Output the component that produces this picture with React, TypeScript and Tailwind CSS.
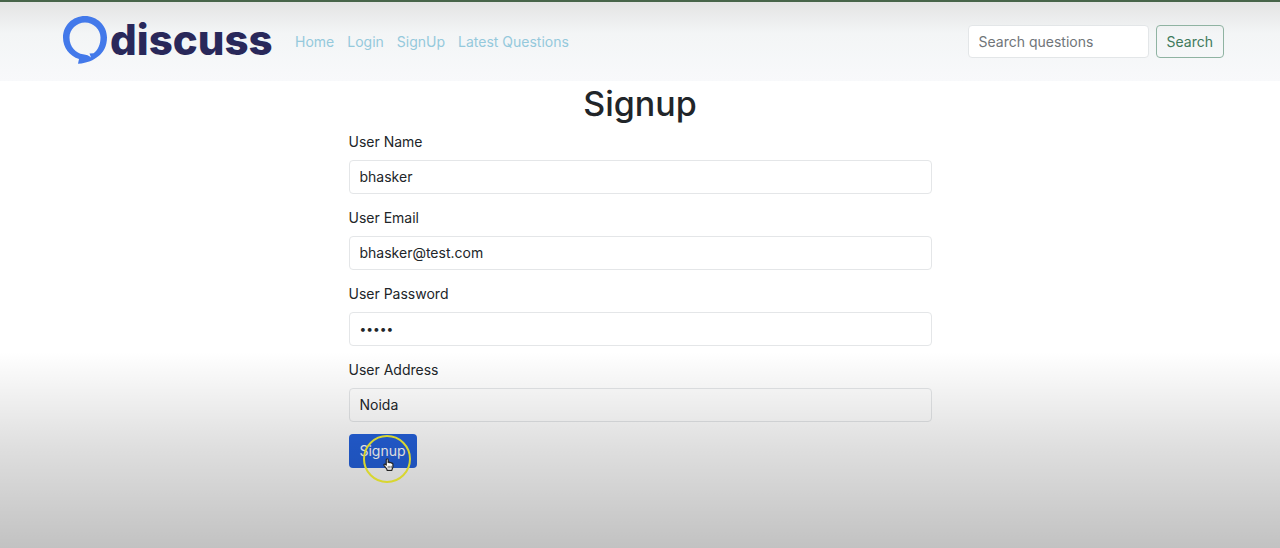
import React from "react";

const links = ["Home", "Login", "SignUp", "Latest Questions"];

const fields = [
  { id: "username", label: "User Name", type: "text", value: "bhasker" },
  { id: "email", label: "User Email", type: "email", value: "bhasker@test.com" },
  { id: "password", label: "User Password", type: "password", value: "12345" },
  { id: "address", label: "User Address", type: "text", value: "Noida" },
];

function Logo() {
  return (
    <span className="flex h-12 items-center gap-[3px]" role="img" aria-label="discuss">
      <svg className="h-12 w-11 shrink-0" viewBox="0 0 44 48" aria-hidden="true">
        <path
          fill="#4379ea"
          fillRule="evenodd"
          d="M22 0C34 0 44 9.500 44 21.500C44 30 40.500 36.500 35 40.500C30.500 44 25 47 15 47.800L16 43C6.500 40 0 31.500 0 21.500C0 9.500 9.500 0 22 0ZM22 6.500C13.500 6.500 6.500 13.500 6.500 21.500C6.500 31 13 37.300 20 38.300C23.500 38.800 26 39.500 28 41.500L26.500 37.500L30.500 37.300C35 34 37.500 28.500 37.500 21.500C37.500 13.500 30.500 6.500 22 6.500Z"
        />
      </svg>
      <span className="text-[42px] leading-[50px] font-extrabold text-[#29285a]">discuss</span>
    </span>
  );
}

function Pointer() {
  return (
    <div className="pointer-events-none absolute left-[14px] top-px z-10 size-12 rounded-full border-2 border-[#d8d630]">
      <svg className="absolute left-[18px] top-[21px] h-[13px] w-[11px]" viewBox="0 0 16 20" aria-hidden="true">
        <path
          d="M4.500 11V3c0-2.400 3-2.400 3 0v4c.6-1 2.400-.8 2.700.4.800-.8 2.200-.4 2.400.7 1.100-.4 2.200.2 2.200 1.400V13c0 3-1.600 3.600-1.600 6H6C5.800 16.500 3 14.500 1.200 11.500c-1-1.800 1.300-2.700 2.300-1.500Z"
          fill="#fff"
          stroke="#222"
          strokeWidth="1.800"
          strokeLinejoin="round"
        />
        <path d="M7.500 12v4M10 12v4M12.300 12v4" stroke="#222" strokeWidth="1" />
      </svg>
    </div>
  );
}

export default function App() {
  return (
    <div className="relative min-h-screen bg-white text-sm leading-6 text-[#212529] [font-family:Inter,sans-serif]">
      <header className="flex items-center border-t-2 border-[#48654a] bg-linear-to-b from-[#e4e4e4] via-[#f3f5f6] via-40% to-[#f8f9fb] pt-[14px] pr-14 pb-[17px] pl-[63px]">
        <a href="#home" className="w-[210px] shrink-0">
          <Logo />
        </a>
        <nav className="ml-[22px] flex gap-[13px] pt-1 text-[#95c9dc]">
          {links.map((link) => (
            <a key={link} href="#" className="whitespace-nowrap">
              {link}
            </a>
          ))}
        </nav>
        <form className="ml-auto flex gap-[7px] pt-[2px]" role="search" onSubmit={(e) => e.preventDefault()}>
          <input
            type="search"
            aria-label="Search questions"
            placeholder="Search questions"
            className="h-[33px] w-[181px] rounded-sm border border-[#e3e6e8] bg-white px-[10px] placeholder:text-[#707579]"
          />
          <button type="submit" className="h-[33px] rounded-sm border border-[#8fb3a2] px-[10px] pt-px text-[#3f7a5c]">
            Search
          </button>
        </form>
      </header>
      <main className="mx-auto w-full max-w-[583px]">
        <h1 className="pt-px pb-1 text-center text-[34px] leading-[44px] font-medium">Signup</h1>
        <form onSubmit={(e) => e.preventDefault()}>
          {fields.map((field) => (
            <div key={field.id} className="mb-3">
              <label htmlFor={field.id} className="mb-[6px] block leading-6">
                {field.label}
              </label>
              <input
                id={field.id}
                type={field.type}
                defaultValue={field.value}
                className="block h-[34px] w-full rounded-sm border border-[#e4e6e8] px-[10px] pb-[2px] [&[type=password]]:text-xs"
              />
            </div>
          ))}
          <div className="relative">
            <button type="submit" className="h-[34px] rounded-sm bg-[#2461dc] px-[11px] text-white">
              Signup
            </button>
            <Pointer />
          </div>
        </form>
      </main>
      <div className="pointer-events-none absolute inset-x-0 bottom-0 h-[196px] bg-linear-to-b from-transparent via-black/13 to-black/24" />
    </div>
  );
}
